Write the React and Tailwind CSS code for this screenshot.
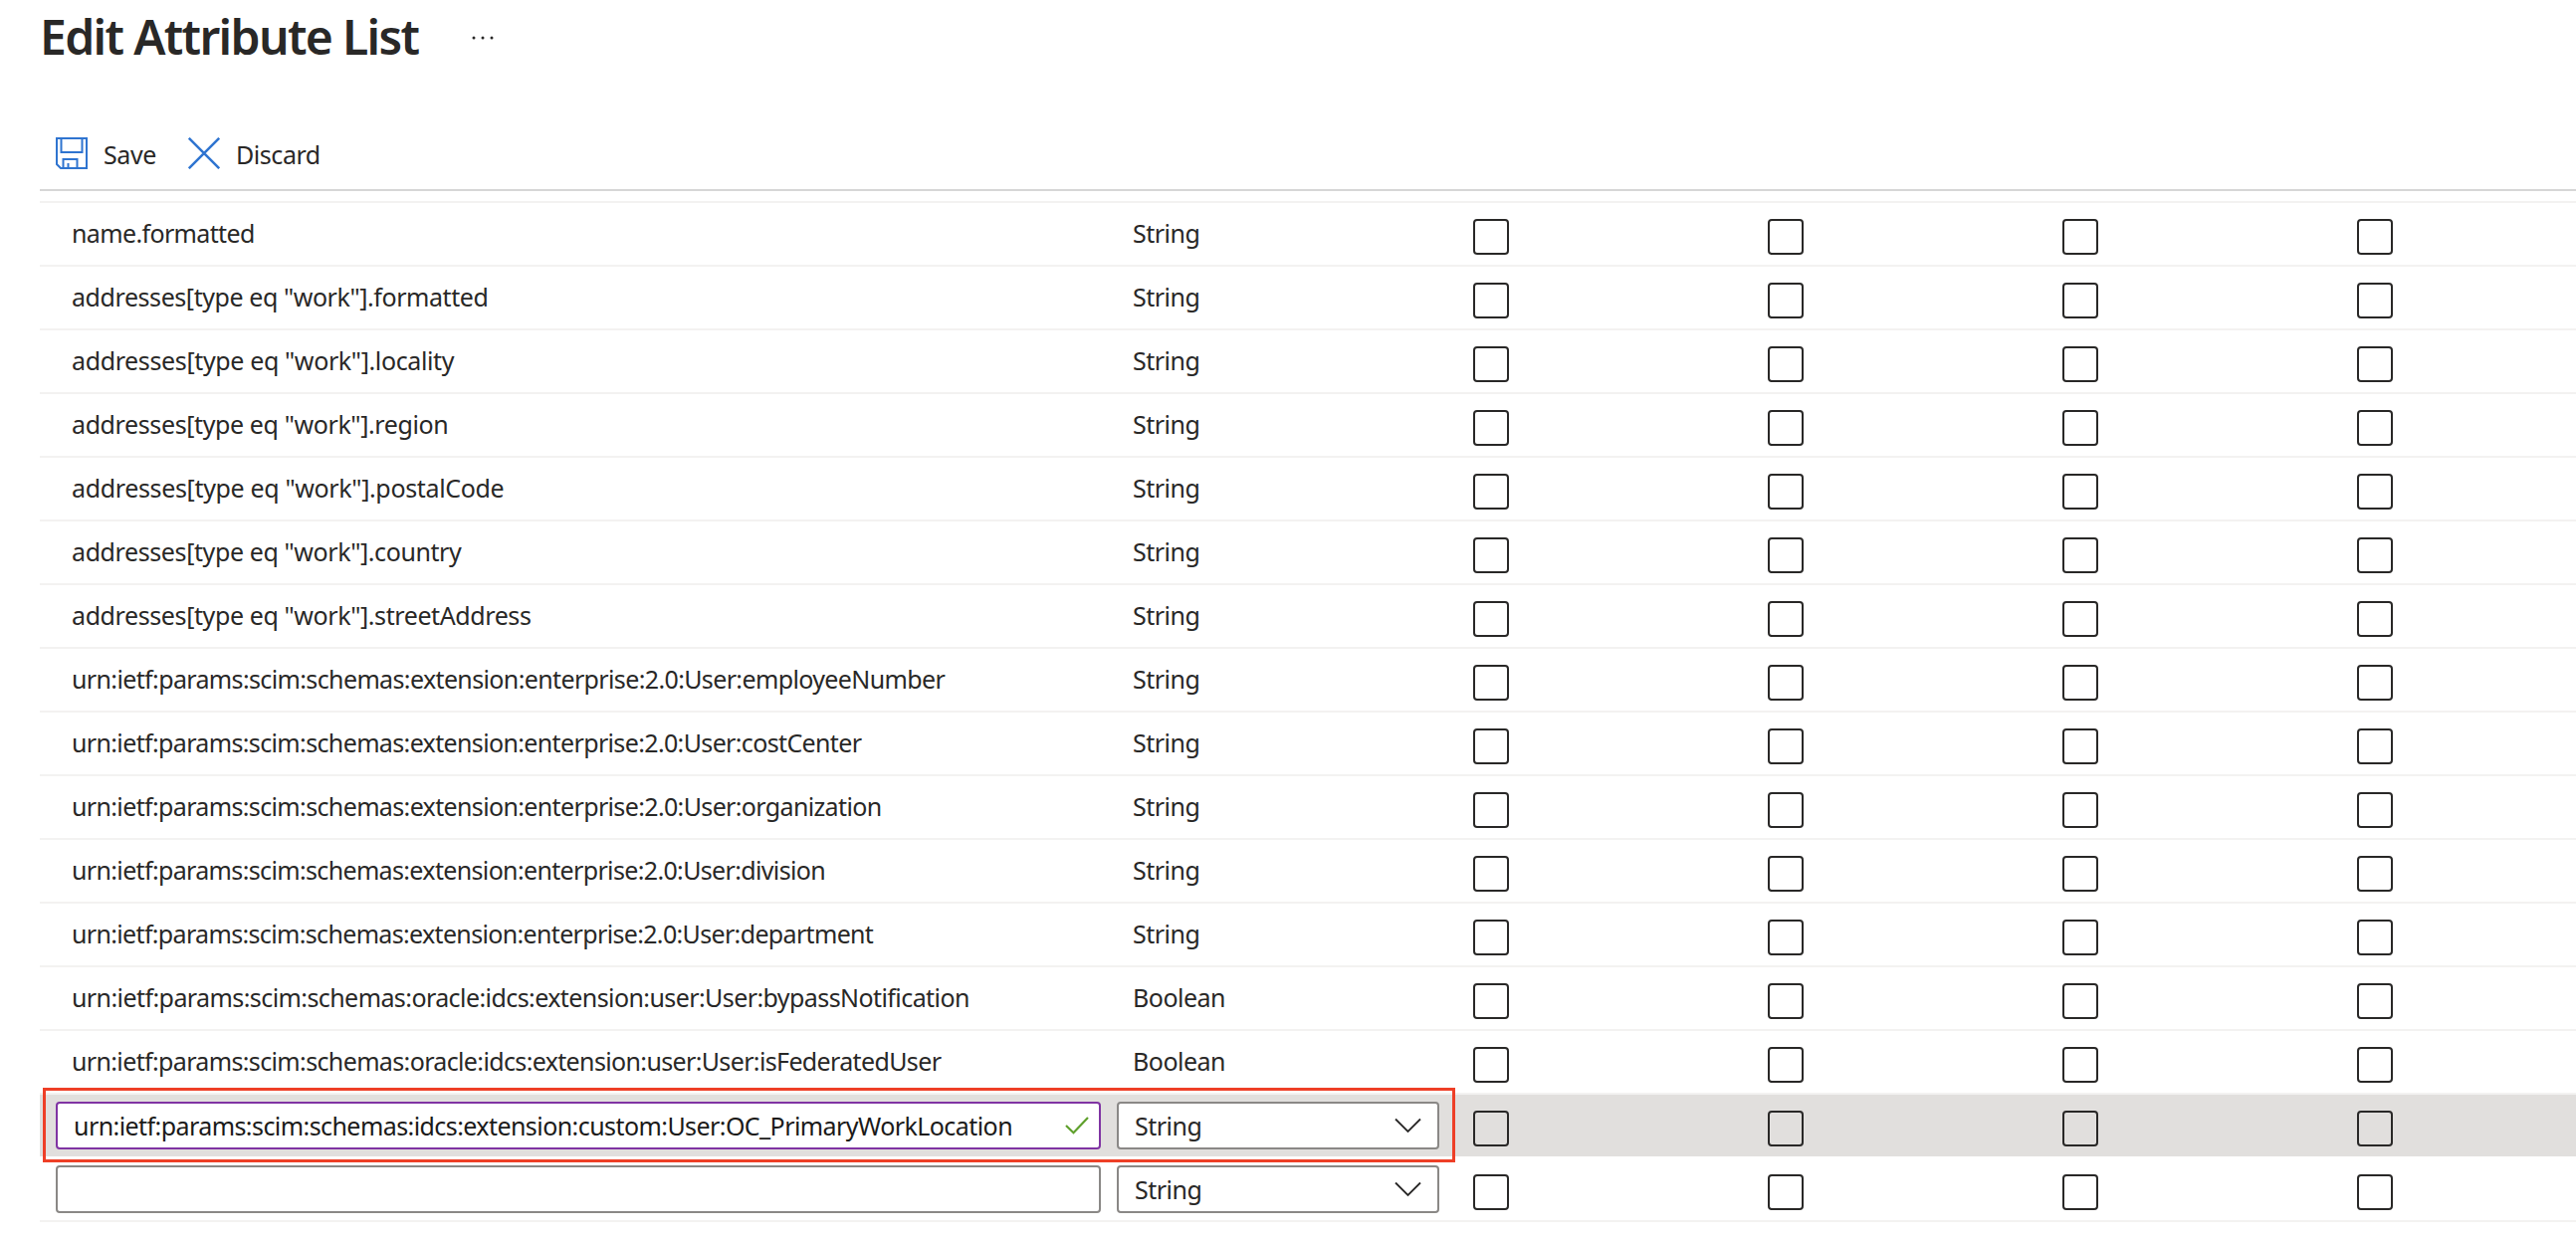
const ADDRESS = 'tracking-[-0.4px]';
const URN = 'tracking-[-0.64px]';

const rows = [
  ['name.formatted', 'String', 'tracking-[-0.64px]'],
  ['addresses[type eq "work"].formatted', 'String', 'tracking-[-0.43px]'],
  ['addresses[type eq "work"].locality', 'String', 'tracking-[-0.37px]'],
  ['addresses[type eq "work"].region', 'String', 'tracking-[-0.39px]'],
  ['addresses[type eq "work"].postalCode', 'String', 'tracking-[-0.35px]'],
  ['addresses[type eq "work"].country', 'String', ADDRESS],
  ['addresses[type eq "work"].streetAddress', 'String', ADDRESS],
  ['urn:ietf:params:scim:schemas:extension:enterprise:2.0:User:employeeNumber', 'String', 'tracking-[-0.63px]'],
  ['urn:ietf:params:scim:schemas:extension:enterprise:2.0:User:costCenter', 'String', URN],
  ['urn:ietf:params:scim:schemas:extension:enterprise:2.0:User:organization', 'String', URN],
  ['urn:ietf:params:scim:schemas:extension:enterprise:2.0:User:division', 'String', 'tracking-[-0.65px]'],
  ['urn:ietf:params:scim:schemas:extension:enterprise:2.0:User:department', 'String', 'tracking-[-0.66px]'],
  ['urn:ietf:params:scim:schemas:oracle:idcs:extension:user:User:bypassNotification', 'Boolean', 'tracking-[-0.58px]'],
  ['urn:ietf:params:scim:schemas:oracle:idcs:extension:user:User:isFederatedUser', 'Boolean', URN],
];

function SaveIcon() {
  return (
    <svg className="h-8 w-8" viewBox="0 0 32 32" fill="none" stroke="#2f74d0" strokeWidth="2">
      <path d="M1 1H31V31H5L1 27Z" />
      <path d="M5.5 1V15H26.5V1M7.5 31V22H21.5V31M12.5 31V26" />
    </svg>
  );
}

function DiscardIcon() {
  return (
    <svg className="h-8 w-8" viewBox="0 0 32 32" fill="none" stroke="#2f74d0" strokeWidth="2.5">
      <path d="M.8 .8L31.2 31.2M31.2 .8L.8 31.2" />
    </svg>
  );
}

function Checkboxes() {
  return (
    <div className="flex gap-[260px] pt-1.5">
      {[0, 1, 2, 3].map((i) => (
        <div key={i} className="h-9 w-9 shrink-0 rounded border-2 border-[#292827]" />
      ))}
    </div>
  );
}

function TypeSelect() {
  return (
    <div className="ml-4 flex h-12 w-[324px] shrink-0 items-center justify-between rounded border-2 border-[#8a8886] bg-white pr-4 pl-4">
      <span className="tracking-[-0.5px]">String</span>
      <svg className="h-4 w-[27px]" viewBox="0 0 27 16" fill="none" stroke="#292827" strokeWidth="1.8">
        <path d="M1 1.5L13.5 14L26 1.5" />
      </svg>
    </div>
  );
}

function EditRow({ value, active }) {
  return (
    <div className={active ? 'relative flex h-16 items-center border-b-2 border-white bg-[#e1dfdd] pl-4' : 'relative flex h-16 items-center border-b-2 border-[#f3f2f1] pl-4'}>
      <div className={active ? 'flex h-12 w-[1050px] shrink-0 items-center justify-between rounded border-2 border-[#8034a3] bg-white pr-2.5 pl-4' : 'h-12 w-[1050px] shrink-0 rounded border-2 border-[#8a8886] bg-white'}>
        {active && <span className="tracking-[-0.57px] whitespace-nowrap text-[#1b1a19]">{value}</span>}
        {active && (
          <svg className="h-[18px] w-6" viewBox="0 0 24 18" fill="none" stroke="#5fa02c" strokeWidth="2.2">
            <path d="M1 9L8.5 16.2L23 1" />
          </svg>
        )}
      </div>
      <TypeSelect />
      <div className="ml-[34px]"><Checkboxes /></div>
      {active && <div className="absolute -top-[7px] left-[3px] h-[75px] w-[1419px] border-[3px] border-[#ee3f27]" />}
    </div>
  );
}

export default function App() {
  return (
    <div className="h-[1244px] w-[2588px] overflow-hidden bg-white pl-10 font-['Noto_Sans','Open_Sans',sans-serif] text-[25px] leading-9 text-[#292827]">
      <header className="flex h-[118px] items-start">
        <h1 className="w-[433px] text-[48px] leading-[74px] font-semibold tracking-[-1.65px] whitespace-nowrap">Edit Attribute List</h1>
        <svg className="mt-9 h-1 w-6" viewBox="0 0 24 4" fill="#292827">
          <circle cx="3" cy="2" r="1.5" />
          <circle cx="12" cy="2" r="1.5" />
          <circle cx="21" cy="2" r="1.5" />
        </svg>
      </header>
      <div className="flex h-[74px] items-start border-b-2 border-[#d6d6d6] pt-5 pl-4">
        <SaveIcon />
        <span className="ml-4 w-[85px] leading-[34px] tracking-[-0.4px]">Save</span>
        <DiscardIcon />
        <span className="ml-4 leading-[34px] tracking-[-0.45px]">Discard</span>
      </div>
      <div className="mt-2.5 border-t-2 border-[#f3f2f1]">
        {rows.map(([name, type, tracking]) => (
          <div key={name} className="flex h-16 items-center border-b-2 border-[#f3f2f1] pl-8">
            <span className={`w-[1066px] shrink-0 pb-0.5 whitespace-nowrap ${tracking}`}>{name}</span>
            <span className="w-[342px] shrink-0 pb-0.5 tracking-[-0.5px]">{type}</span>
            <Checkboxes />
          </div>
        ))}
        <EditRow active value="urn:ietf:params:scim:schemas:idcs:extension:custom:User:OC_PrimaryWorkLocation" />
        <EditRow />
      </div>
    </div>
  );
}
